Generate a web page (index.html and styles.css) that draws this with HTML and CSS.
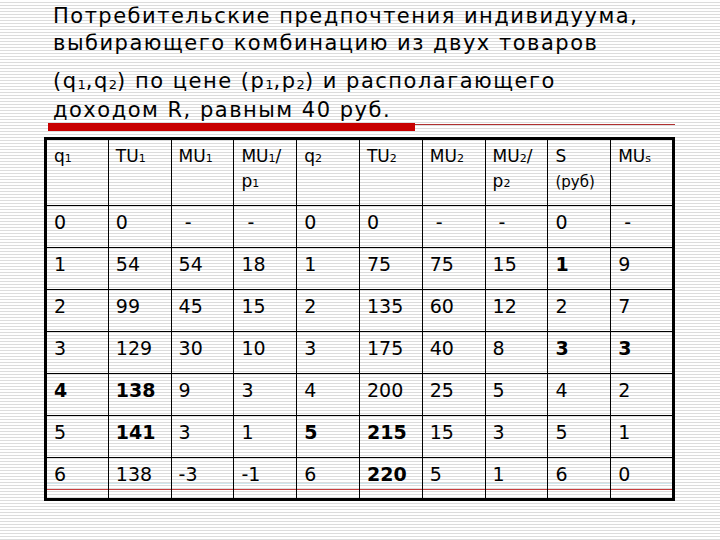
FILE: index.html
```html
<!DOCTYPE html>
<html lang="ru">
<head>
<meta charset="utf-8">
<link rel="stylesheet" href="styles.css">
</head>
<body>
<div class="slide">
  <div class="title">
    <div class="lines-a">Потребительские предпочтения индивидуума,<br>выбирающего комбинацию из двух товаров</div>
    <div class="lines-b">(q<sub>1</sub>,q<sub>2</sub>) по цене (p<sub>1</sub>,p<sub>2</sub>) и располагающего<br>доходом R, равным 40 руб.</div>
  </div>
  <div class="rule"><span class="rule-bar"></span><span class="rule-line"></span></div>
  <div class="table-wrap">
    <table class="grid">
      <tr class="head">
        <td>q<sub>1</sub></td>
        <td>TU<sub>1</sub></td>
        <td>MU<sub>1</sub></td>
        <td>MU<sub>1</sub>/<br>p<sub>1</sub></td>
        <td>q<sub>2</sub></td>
        <td>TU<sub>2</sub></td>
        <td>MU<sub>2</sub></td>
        <td>MU<sub>2</sub>/<br>p<sub>2</sub></td>
        <td>S<br><span class="unit">(руб)</span></td>
        <td>MU<sub>s</sub></td>
      </tr>
      <tr>
        <td>0</td><td>0</td><td>&nbsp;-</td><td>&nbsp;-</td><td>0</td><td>0</td><td>&nbsp;-</td><td>&nbsp;-</td><td>0</td><td>&nbsp;-</td>
      </tr>
      <tr>
        <td>1</td><td>54</td><td>54</td><td>18</td><td>1</td><td>75</td><td>75</td><td>15</td><td><b>1</b></td><td>9</td>
      </tr>
      <tr>
        <td>2</td><td>99</td><td>45</td><td>15</td><td>2</td><td>135</td><td>60</td><td>12</td><td>2</td><td>7</td>
      </tr>
      <tr>
        <td>3</td><td>129</td><td>30</td><td>10</td><td>3</td><td>175</td><td>40</td><td>8</td><td><b>3</b></td><td><b>3</b></td>
      </tr>
      <tr>
        <td><b>4</b></td><td><b>138</b></td><td>9</td><td>3</td><td>4</td><td>200</td><td>25</td><td>5</td><td>4</td><td>2</td>
      </tr>
      <tr>
        <td>5</td><td><b>141</b></td><td>3</td><td>1</td><td><b>5</b></td><td><b>215</b></td><td>15</td><td>3</td><td>5</td><td>1</td>
      </tr>
      <tr>
        <td>6</td><td>138</td><td>-3</td><td>-1</td><td>6</td><td><b>220</b></td><td>5</td><td>1</td><td>6</td><td>0</td>
      </tr>
    </table>
    <div class="mark-red"></div>
    <div class="mark-blue"></div>
  </div>
</div>
</body>
</html>
```
FILE: styles.css
```css
html, body {
  margin: 0;
  padding: 0;
}
body {
  width: 720px;
  height: 540px;
  overflow: hidden;
  background-color: #ffffff;
  background-image: repeating-linear-gradient(to bottom, #ffffff 0px, #ffffff 2px, #dcdcdc 2px, #dcdcdc 3px);
  font-family: "DejaVu Sans", Verdana, sans-serif;
  color: #000;
}
.slide {
  padding-top: 3px;
}
.title {
  padding-left: 53px;
  font-size: 21px;
  letter-spacing: 1.5px;
  white-space: nowrap;
}
.lines-a {
  line-height: 27px;
}
.lines-b {
  margin-top: 10px;
  line-height: 29px;
}
.title sub {
  font-size: 13px;
  line-height: 1;
  vertical-align: -1px;
  letter-spacing: 0;
}
.rule {
  display: flex;
  align-items: flex-start;
  margin-left: 48px;
  width: 627px;
  margin-top: -2px;
  position: relative;
}
.rule-bar {
  width: 367px;
  height: 8px;
  background: #c80000;
}
.rule-line {
  flex: 1;
  height: 1px;
  margin-top: 1px;
  background: #b03030;
}
.table-wrap {
  position: relative;
  margin-left: 44px;
  margin-top: 6px;
  width: 631px;
}
.grid {
  border-collapse: collapse;
  table-layout: fixed;
  width: 631px;
  border: 3px solid #000;
}
.grid tr {
  height: 42px;
}
.grid tr.head {
  height: 67px;
}
.grid td {
  border: 1px solid #000;
  padding: 5px 0 0 7px;
  vertical-align: top;
  font-size: 19px;
  line-height: 22px;
  white-space: nowrap;
  overflow: hidden;
}
.grid tr.head td {
  font-size: 17px;
  line-height: 25px;
  padding-top: 4px;
}
.grid sub {
  font-size: 11px;
  line-height: 1;
  vertical-align: 0;
}
.grid .unit {
  font-size: 15px;
}
.mark-red {
  position: absolute;
  z-index: -1;
  left: 3px;
  right: 3px;
  bottom: 11px;
  height: 1px;
  background: #c84040;
}
.mark-blue {
  position: absolute;
  z-index: -1;
  left: 3px;
  right: 3px;
  bottom: 17px;
  height: 1px;
  background: #cfe8ef;
}
```
